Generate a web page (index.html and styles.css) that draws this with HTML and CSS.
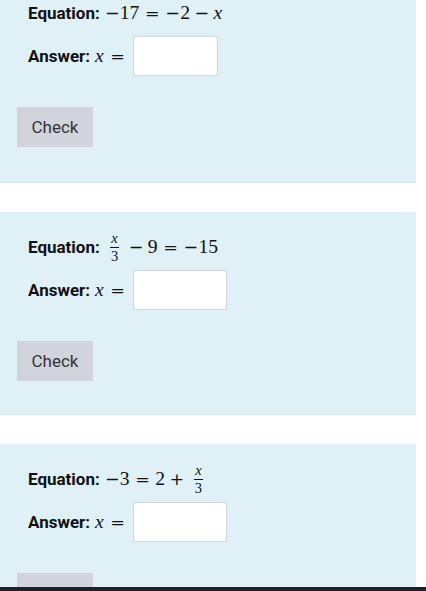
FILE: index.html
```html
<!DOCTYPE html>
<html lang="en">
<head>
<meta charset="utf-8">
<title>Equations</title>
<link rel="stylesheet" href="styles.css">
</head>
<body>
<main class="list">
  <section class="card card-first">
    <div class="eq-row"><span class="label">Equation:</span><span class="math"><span class="sym">−</span><span>17</span><span class="sym rel">=</span><span class="sym">−</span><span>2</span><span class="sym bin">−</span><i>x</i></span></div>
    <div class="ans-row"><span class="label">Answer:</span><span class="math"><i>x</i><span class="sym rel">=</span></span><input class="answer answer-narrow" type="text"></div>
    <button class="check" type="button">Check</button>
  </section>
  <section class="card">
    <div class="eq-row"><span class="label">Equation:</span><span class="math"><span class="frac"><i class="num">x</i><span class="den">3</span></span><span class="sym bin">−</span><span>9</span><span class="sym rel">=</span><span class="sym">−</span><span>15</span></span></div>
    <div class="ans-row"><span class="label">Answer:</span><span class="math"><i>x</i><span class="sym rel">=</span></span><input class="answer" type="text"></div>
    <button class="check" type="button">Check</button>
  </section>
  <section class="card">
    <div class="eq-row"><span class="label">Equation:</span><span class="math"><span class="sym">−</span><span>3</span><span class="sym rel">=</span><span>2</span><span class="sym bin">+</span><span class="frac"><i class="num">x</i><span class="den">3</span></span></span></div>
    <div class="ans-row"><span class="label">Answer:</span><span class="math"><i>x</i><span class="sym rel">=</span></span><input class="answer" type="text"></div>
    <button class="check" type="button">Check</button>
  </section>
</main>
<div class="bottom-bar"></div>
</body>
</html>
```
FILE: styles.css
```css
html, body {
  margin: 0;
  padding: 0;
  background: #ffffff;
  overflow: hidden;
}
body {
  font-family: Roboto, "Liberation Sans", sans-serif;
  font-size: 17px;
  color: #111111;
}
.list {
  display: flex;
  flex-direction: column;
  gap: 29px;
  padding-right: 10px;
}
.card {
  background: #dff0f7;
  border-bottom: 1px solid #d3e8f1;
  padding: 22px 17px 33px;
  display: flex;
  flex-direction: column;
  align-items: flex-start;
}
.card-first {
  margin-top: -20px;
  padding-top: 20px;
  padding-bottom: 35px;
}
.eq-row, .ans-row {
  display: flex;
  align-items: center;
  padding-left: 11px;
}
.eq-row {
  height: 26px;
}
.ans-row {
  margin-top: 10px;
  height: 40px;
}
.label {
  font-weight: 700;
  margin-right: 5px;
}
.math {
  font-family: "Liberation Serif", "DejaVu Serif", serif;
  font-size: 19.6px;
  display: inline-flex;
  align-items: center;
  white-space: nowrap;
}
.math i {
  font-style: italic;
  padding-right: 1px;
}
.sym {
  display: inline-block;
  width: 15px;
  text-align: center;
  font-family: "DejaVu Serif", "Liberation Serif", serif;
  font-size: 17.5px;
}
.rel {
  margin: 0 5.4px;
}
.bin {
  margin: 0 4.3px;
}
.frac {
  display: inline-flex;
  flex-direction: column;
  align-items: center;
  font-size: 14.5px;
  line-height: 1;
  margin: 0 5.5px;
}
.frac .num {
  padding: 0 1px 1px;
  border-bottom: 1px solid #111111;
}
.frac .den {
  padding-top: 1px;
}
.answer {
  box-sizing: border-box;
  width: 94px;
  height: 40px;
  border: 1px solid #cfd6dc;
  background: #ffffff;
  margin: 0 0 0 2.5px;
  padding: 0 6px;
  font-size: 16px;
}
.answer-narrow {
  width: 85px;
}
.check {
  margin-top: 31px;
  height: 40px;
  width: 76px;
  border: none;
  background: #d1d5db;
  color: #333333;
  font-family: Roboto, "Liberation Sans", sans-serif;
  font-size: 17px;
  padding: 0;
}
.bottom-bar {
  position: fixed;
  left: 0;
  right: 0;
  bottom: 0;
  height: 4px;
  background: #1e2029;
}
```
